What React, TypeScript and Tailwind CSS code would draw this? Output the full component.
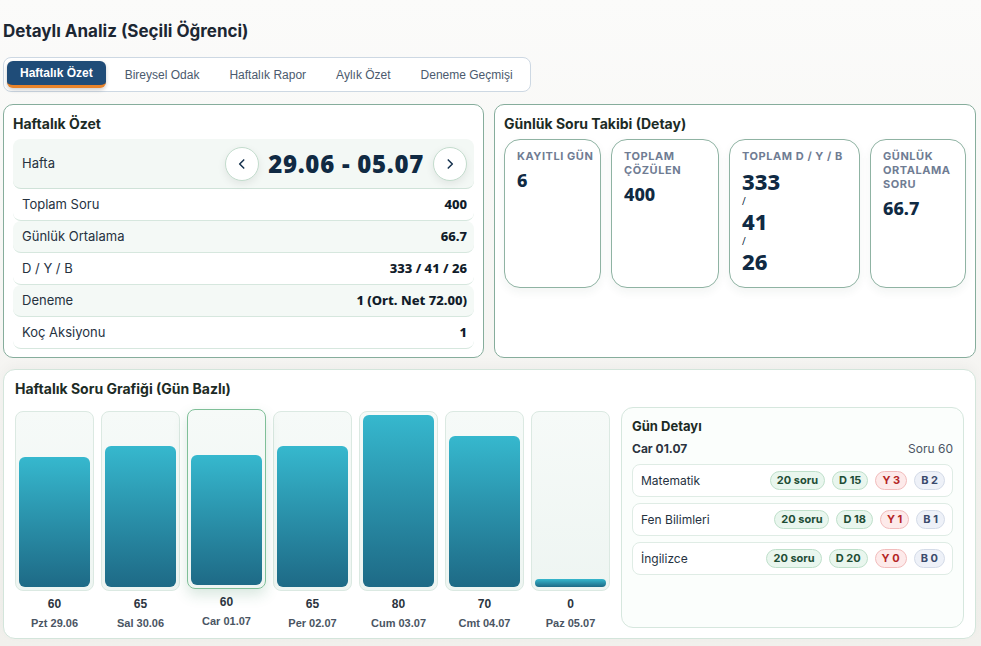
import React from 'react';

type Day = { label: string; value: number };

const days: Day[] = [
  { label: 'Pzt 29.06', value: 60 },
  { label: 'Sal 30.06', value: 65 },
  { label: 'Car 01.07', value: 60 },
  { label: 'Per 02.07', value: 65 },
  { label: 'Cum 03.07', value: 80 },
  { label: 'Cmt 04.07', value: 70 },
  { label: 'Paz 05.07', value: 0 },
];

const tabs = ['Haftalık Özet', 'Bireysel Odak', 'Haftalık Rapor', 'Aylık Özet', 'Deneme Geçmişi'];

const summaryRows = [
  { label: 'Toplam Soru', value: '400' },
  { label: 'Günlük Ortalama', value: '66.7' },
  { label: 'D / Y / B', value: '333 / 41 / 26' },
  { label: 'Deneme', value: '1 (Ort. Net 72.00)' },
  { label: 'Koç Aksiyonu', value: '1' },
];

const subjects = [
  { name: 'Matematik', total: 20, d: 15, y: 3, b: 2 },
  { name: 'Fen Bilimleri', total: 20, d: 18, y: 1, b: 1 },
  { name: 'İngilizce', total: 20, d: 20, y: 0, b: 0 },
];

const sans = { fontFamily: 'Inter, "Noto Sans", sans-serif' };
const arial = { fontFamily: '"Liberation Sans", Arial, sans-serif' };
const heavy = { fontFamily: '"Noto Sans", "Open Sans", sans-serif' };

const Chevron: React.FC<{ dir: 'left' | 'right' }> = ({ dir }) => (
  <svg width="14" height="14" viewBox="0 0 24 24" fill="none" stroke="#16324f" strokeWidth="2.6" strokeLinecap="round" strokeLinejoin="round">
    {dir === 'left' ? <path d="M15 5l-7 7 7 7" /> : <path d="M9 5l7 7-7 7" />}
  </svg>
);

const StatCard: React.FC<{ label: string; className: string; nowrap?: boolean; children: React.ReactNode }> = ({ label, className, nowrap, children }) => (
  <div className={`shrink-0 rounded-2xl border border-[#8fb3a3] bg-white px-3 pt-[9px] shadow-[0_4px_10px_rgba(30,60,50,0.06)] ${className}`}>
    <div className={`text-[11px] font-bold uppercase leading-[14px] tracking-[0.05em] text-[#6f7c93] ${nowrap ? 'whitespace-nowrap' : ''}`}>{label}</div>
    <div style={heavy} className="mt-[6px] text-[18px] font-extrabold leading-[22px] text-[#102a43]">{children}</div>
  </div>
);

const Badge: React.FC<{ tone: 'green' | 'red' | 'slate'; children: React.ReactNode }> = ({ tone, children }) => {
  const tones = {
    green: 'bg-[#e9f6ee] border-[#bfe0cb] text-[#1e4d35]',
    red: 'bg-[#fdeaea] border-[#f2bcbc] text-[#b42626]',
    slate: 'bg-[#eef1f8] border-[#d4dbe8] text-[#3a4a6c]',
  };
  return (
    <span className={`inline-flex h-[19px] items-center rounded-full border px-[6px] text-[11px] font-bold ${tones[tone]}`}>{children}</span>
  );
};

export default function App() {
  const selected = 2;
  const max = 80;

  return (
    <div style={sans} className="h-[646px] w-[981px] overflow-hidden bg-gradient-to-b from-[#fbfbfa] to-[#f1f0ec] text-[#1f2a37]">
      <div className="px-[3px] pt-[20px]">
        <h1 className="text-[17px] font-bold leading-[22px] text-[#1c2733]">Detaylı Analiz (Seçili Öğrenci)</h1>

        {/* tabs */}
        <div style={arial} className="mt-[15px] inline-flex h-[35px] items-center gap-[2px] rounded-lg border border-[#cdd8e3] bg-white px-[3px]">
          {tabs.map((t, i) =>
            i === 0 ? (
              <button key={t} className="mr-[3px] h-[27px] rounded-md border-b-[3px] border-[#e8832a] bg-[#1f4c78] px-[13px] text-[12px] font-bold text-white shadow-[0_2px_4px_rgba(0,0,0,0.2)]">
                {t}
              </button>
            ) : (
              <button key={t} className="h-[27px] px-[14px] text-[12px] text-[#4b5a6e]">
                {t}
              </button>
            )
          )}
        </div>

        {/* top row */}
        <div className="mt-[12px] mr-[2px] flex gap-[10px]">
          <div className="h-[254px] w-[481px] shrink-0 rounded-[10px] border border-[#86ad9c] bg-white px-[9px] pt-[9px]">
            <h2 className="text-[14px] font-bold leading-[20px] text-[#1c2b25]">Haftalık Özet</h2>
            <div className="mt-[5px] flex h-[50px] items-center justify-between rounded-lg border-b border-[#cfe2d8] bg-[#f3f8f5] pl-[9px] pr-[7px]">
              <span className="text-[13px] text-[#26323f]">Hafta</span>
              <div className="flex items-center gap-[9px]">
                <button className="flex h-[34px] w-[34px] items-center justify-center rounded-full border border-[#c3dccd] bg-white shadow-[0_3px_8px_rgba(0,0,0,0.08)]">
                  <Chevron dir="left" />
                </button>
                <span style={heavy} className="text-[24px] font-black tracking-[0.03em] text-[#102a43]">29.06 - 05.07</span>
                <button className="flex h-[34px] w-[34px] items-center justify-center rounded-full border border-[#c3dccd] bg-white shadow-[0_3px_8px_rgba(0,0,0,0.08)]">
                  <Chevron dir="right" />
                </button>
              </div>
            </div>
            {summaryRows.map((r, i) => (
              <div
                key={r.label}
                className={`flex h-[32px] items-center justify-between rounded-lg border-b border-[#d6e7de] pl-[9px] pr-[7px] ${i % 2 === 1 ? 'bg-[#f4f9f6]' : 'bg-white'}`}
              >
                <span className="text-[13px] text-[#26323f]">{r.label}</span>
                <span style={heavy} className="text-[13px] font-extrabold text-[#111c2a]">{r.value}</span>
              </div>
            ))}
          </div>

          <div className="h-[254px] min-w-0 flex-1 rounded-[10px] border border-[#86ad9c] bg-white px-[9px] pt-[9px]">
            <h2 className="text-[14px] font-bold leading-[20px] text-[#1c2b25]">Günlük Soru Takibi (Detay)</h2>
            <div className="mt-[5px] flex h-[149px] gap-[10px]">
              <StatCard label="Kayıtlı Gün" className="w-[97px]" nowrap>6</StatCard>
              <StatCard label="Toplam Çözülen" className="w-[108px]">400</StatCard>
              <StatCard label="Toplam D / Y / B" className="w-[131px]">
                <div className="text-[22px] leading-[24px]">333</div>
                <div className="text-[10px] font-normal leading-[16px]">/</div>
                <div className="text-[22px] leading-[24px]">41</div>
                <div className="text-[10px] font-normal leading-[16px]">/</div>
                <div className="text-[22px] leading-[24px]">26</div>
              </StatCard>
              <StatCard label="Günlük Ortalama Soru" className="w-[96px]">66.7</StatCard>
            </div>
          </div>
        </div>

        {/* weekly chart */}
        <div className="mt-[11px] mr-[2px] h-[270px] rounded-xl border border-[#d3e5db] bg-white px-[11px] pt-[9px] shadow-[0_-4px_12px_rgba(0,0,0,0.03)]">
          <h2 className="text-[14px] font-bold leading-[20px] text-[#1c2b25]">Haftalık Soru Grafiği (Gün Bazlı)</h2>
          <div className="mt-[12px] flex gap-[11px]">
            <div style={arial} className="flex gap-[7px]">
              {days.map((d, i) => {
                const h = Math.max(8, Math.round((d.value / max) * 173));
                const active = i === selected;
                return (
                  <div key={d.label} className={`flex w-[79px] flex-col items-center ${active ? '-translate-y-[2px]' : ''}`}>
                    <div
                      className={`flex h-[180px] w-full flex-col justify-end rounded-lg border bg-gradient-to-b from-[#f6faf8] to-[#eef5f2] p-[3px] ${active ? 'border-[#7fbf98] shadow-[0_6px_14px_rgba(40,120,80,0.18)]' : 'border-[#dbe9e2]'}`}
                    >
                      <div style={{ height: h }} className="w-full rounded-md bg-gradient-to-b from-[#36b8ce] to-[#1e6a86]" />
                    </div>
                    <div className="mt-[6px] text-[12px] font-bold leading-[14px] text-[#2b3440]">{d.value}</div>
                    <div className="mt-[5px] text-[11px] font-bold leading-[14px] text-[#4a5563]">{d.label}</div>
                  </div>
                );
              })}
            </div>

            <div className="-mt-[4px] h-[221px] flex-1 rounded-xl border border-[#d6e7de] bg-[#fbfefc] px-[10px] pt-[9px]">
              <h3 className="text-[13px] font-bold leading-[18px] text-[#1c2b25]">Gün Detayı</h3>
              <div className="mt-[5px] flex items-center justify-between">
                <span className="text-[12px] font-bold text-[#2b3440]">Car 01.07</span>
                <span className="text-[12px] text-[#4a5563]">Soru 60</span>
              </div>
              <div className="mt-[6px] flex flex-col gap-[6px]">
                {subjects.map((s) => (
                  <div key={s.name} className="flex h-[33px] items-center justify-between rounded-lg border border-[#dfece5] bg-white pl-[8px] pr-[7px]">
                    <span className="text-[12px] text-[#26323f]">{s.name}</span>
                    <div className="flex gap-[7px]">
                      <Badge tone="green">{s.total} soru</Badge>
                      <Badge tone="green">D {s.d}</Badge>
                      <Badge tone="red">Y {s.y}</Badge>
                      <Badge tone="slate">B {s.b}</Badge>
                    </div>
                  </div>
                ))}
              </div>
            </div>
          </div>
        </div>
      </div>
    </div>
  );
}
